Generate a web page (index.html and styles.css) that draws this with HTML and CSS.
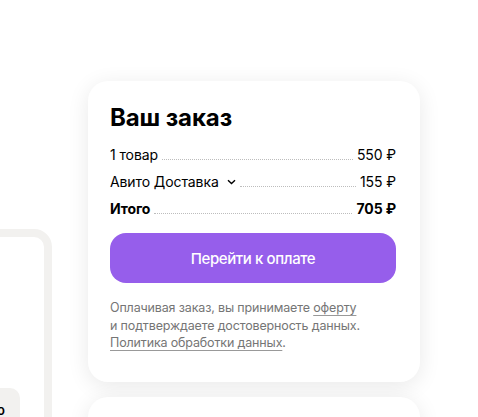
FILE: index.html
```html
<!DOCTYPE html>
<html lang="ru">
<head>
<meta charset="utf-8">
<link rel="stylesheet" href="styles.css">
</head>
<body>
<div class="page">
  <div class="left">
    <div class="frame">
      <div class="chip">Фото</div>
    </div>
  </div>
  <div class="right">
    <div class="card">
      <h1 class="title">Ваш заказ</h1>
      <div class="rows">
        <div class="row"><span class="label">1 товар</span><span class="leader"></span><span class="val">550 ₽</span></div>
        <div class="row"><span class="label">Авито Доставка <svg class="chev" width="9" height="6" viewBox="0 0 9 6"><path d="M1 1.2 L4.5 4.5 L8 1.2" fill="none" stroke="#000" stroke-width="1.4"/></svg></span><span class="leader"></span><span class="val">155 ₽</span></div>
        <div class="row total"><span class="label">Итого</span><span class="leader"></span><span class="val">705 ₽</span></div>
      </div>
      <button class="pay">Перейти к оплате</button>
      <p class="note">Оплачивая заказ, вы принимаете <a>оферту</a><br>и подтверждаете достоверность данных.<br><a>Политика обработки данных</a>.</p>
    </div>
    <div class="card card2"></div>
  </div>
</div>
</body>
</html>
```
FILE: styles.css
```css
html, body {
  margin: 0;
  padding: 0;
  background: #fff;
  overflow: hidden;
}
body {
  font-family: Inter, "Noto Sans", sans-serif;
  color: #000;
  width: 478px;
  height: 417px;
}
.page {
  display: flex;
  align-items: flex-start;
}
.left {
  margin-left: -200px;
  margin-top: 229px;
  width: 252px;
  flex: none;
}
.frame {
  box-sizing: border-box;
  height: 260px;
  border: 8px solid #f2f1ef;
  border-radius: 18px;
  background: #fff;
  padding-top: 151px;
}
.chip {
  width: 208px;
  height: 40px;
  margin-left: 4px;
  background: #f2f1ef;
  border-radius: 10px;
  font-size: 13px;
  font-weight: 600;
  color: #000;
  text-align: right;
  padding: 14px 15px 0 0;
  box-sizing: border-box;
}
.right {
  margin-left: 36px;
  margin-top: 81px;
  width: 332px;
  flex: none;
}
.card {
  box-sizing: border-box;
  background: #fff;
  border-radius: 20px;
  box-shadow: 0 4px 22px rgba(0, 0, 0, 0.09);
  padding: 22px 24px 30px 22px;
}
.card2 {
  margin-top: 15px;
  height: 80px;
}
.title {
  margin: 0;
  font-size: 24px;
  line-height: 30px;
  font-weight: 700;
  letter-spacing: -0.1px;
}
.rows {
  margin-top: 12px;
  display: flex;
  flex-direction: column;
  gap: 7px;
}
.row {
  display: flex;
  align-items: baseline;
  font-size: 14px;
  line-height: 20px;
  letter-spacing: -0.1px;
}
.label {
  white-space: nowrap;
}
.chev {
  margin-left: 4px;
  vertical-align: 2px;
}
.leader {
  flex: 1;
  border-bottom: 1px dotted #bdbdbd;
  margin: 0 4px;
  height: 1px;
}
.val {
  white-space: nowrap;
}
.total {
  font-weight: 700;
}
.pay {
  display: block;
  width: 100%;
  height: 50px;
  margin-top: 14px;
  border: none;
  border-radius: 16px;
  background: #965eeb;
  color: #fff;
  font-family: inherit;
  font-size: 15px;
  font-weight: 500;
  letter-spacing: -0.4px;
}
.note {
  margin: 16px 0 0 0;
  font-size: 12.5px;
  line-height: 17.5px;
  letter-spacing: -0.15px;
  color: #757575;
}
.note a {
  color: #757575;
  text-decoration: underline;
  text-underline-offset: 3px;
  text-decoration-color: #999;
}
```
